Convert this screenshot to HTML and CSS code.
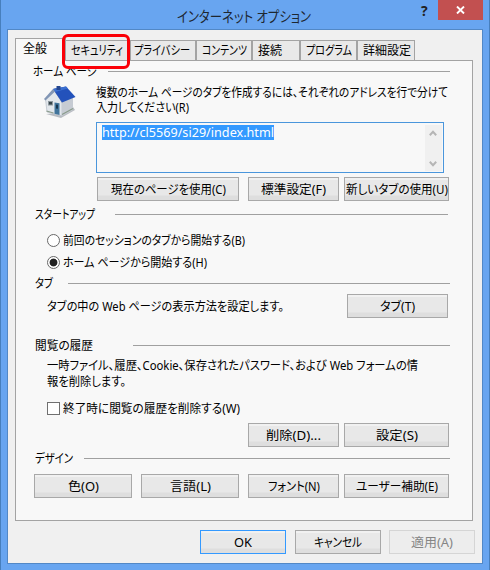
FILE: index.html
```html
<!DOCTYPE html>
<html lang="ja">
<head>
<meta charset="utf-8">
<title>インターネット オプション</title>
<link rel="stylesheet" href="styles.css">
</head>
<body>
<div class="window">
  <header class="titlebar">
    <h1 class="title"><span data-w="134">インターネット オプション</span></h1>
    <span class="help">?</span>
    <div class="close"><svg width="9" height="8" viewBox="0 0 9 8"><path d="M1 .5l7 7M8 .5l-7 7" stroke="#fff" stroke-width="1.9"/></svg></div>
  </header>
  <main class="client">
    <nav class="tabs">
      <div class="tab active"><span data-w="24">全般</span></div>
      <div class="tab security"><span data-w="52">セキュリティ</span><i class="highlight"></i></div>
      <div class="tab privacy"><span data-w="56">プライバシー</span></div>
      <div class="tab content"><span data-w="45">コンテンツ</span></div>
      <div class="tab connect"><span data-w="24">接続</span></div>
      <div class="tab program"><span data-w="46">プログラム</span></div>
      <div class="tab detail"><span data-w="48">詳細設定</span></div>
    </nav>
    <section class="panel">
      <div class="group home"><h2><span data-w="64">ホーム ページ</span></h2><hr></div>
      <div class="homebody">
        <svg class="house" width="36" height="34" viewBox="0 0 36 34">
          <path d="M4 29l15 4 14-8-2-3-14 6z" fill="#b8bcc2"/>
          <path d="M3.500 14L11 5l9 9.500V31L5 27z" fill="#e2e7ec" stroke="#b5bcc6" stroke-width=".7"/>
          <path d="M20 15l11-4v14l-11 6z" fill="#c6cbd3"/>
          <path d="M11 4l3-1 7 12-1 3z" fill="#9aa6b8"/>
          <path d="M11 4L24 1.500 33.500 12 20 17.500z" fill="#2352bb"/>
          <path d="M11 4l13-2.500 2 2L13 7z" fill="#3b6fd0"/>
          <path d="M2 14L11 4l2 2.500-9.500 9z" fill="#8296b5"/>
          <path d="M14.500 1h4v4h-4z" fill="#24468f"/>
          <path d="M6 16h5v4.500H6z" fill="#8d979d"/><path d="M7 17h3v2.500H7z" fill="#354349"/>
          <path d="M12.500 17.500l5 .8V30l-5-1.300z" fill="#41749b"/><path d="M14 19.500l2 .3v4l-2-.3z" fill="#17354e"/>
          <path d="M4.500 26l7 2M20 29.500l11-6" stroke="#899b8b" stroke-width="1.300"/>
        </svg>
        <div class="homeform">
          <p><span data-w="352">複数のホーム ページのタブを作成するには、それぞれのアドレスを行で分けて</span></p>
          <p><span data-w="93">入力してください(R)</span></p>
          <div class="textbox">
            <div class="url"><span data-w="172">http://cl5569/si29/index.html</span></div>
            <div class="scroll">
              <svg width="8" height="6" viewBox="0 0 8 6"><path d="M.8 5.200L4 1.800l3.200 3.400" fill="none" stroke="#b5b5b5" stroke-width="2"/></svg>
              <svg width="8" height="6" viewBox="0 0 8 6"><path d="M.8.8L4 4.200 7.200.8" fill="none" stroke="#b5b5b5" stroke-width="2"/></svg>
            </div>
          </div>
        </div>
      </div>
      <div class="buttons four homebtns">
        <button class="wide"><span data-w="115">現在のページを使用(C)</span></button>
        <button><span data-w="65">標準設定(F)</span></button>
        <button><span data-w="102">新しいタブの使用(U)</span></button>
      </div>
      <div class="group startup"><h2><span data-w="60">スタートアップ</span></h2><hr></div>
      <div class="option"><i class="radio"></i><span data-w="182">前回のセッションのタブから開始する(B)</span></div>
      <div class="option"><i class="radio on"></i><span data-w="144">ホーム ページから開始する(H)</span></div>
      <div class="group tabgroup"><h2><span data-w="18">タブ</span></h2><hr></div>
      <div class="tabrow"><span data-w="237">タブの中の Web ページの表示方法を設定します。</span><button><span data-w="35">タブ(T)</span></button></div>
      <div class="group history"><h2><span data-w="58">閲覧の履歴</span></h2><hr></div>
      <div class="para">
        <p><span data-w="371">一時ファイル、履歴、Cookie、保存されたパスワード、および Web フォームの情</span></p>
        <p><span data-w="79">報を削除します。</span></p>
      </div>
      <div class="option checkrow"><i class="check"></i><span data-w="177">終了時に閲覧の履歴を削除する(W)</span></div>
      <div class="buttons four histbtns">
        <button><span data-w="55">削除(D)...</span></button>
        <button><span data-w="42">設定(S)</span></button>
      </div>
      <div class="group design"><h2><span data-w="38">デザイン</span></h2><hr></div>
      <div class="buttons four designbtns">
        <button><span data-w="31">色(O)</span></button>
        <button><span data-w="41">言語(L)</span></button>
        <button><span data-w="52">フォント(N)</span></button>
        <button><span data-w="82">ユーザー補助(E)</span></button>
      </div>
    </section>
    <footer class="actions">
      <button class="default"><span data-w="18">OK</span></button>
      <button><span data-w="48">キャンセル</span></button>
      <button class="disabled"><span data-w="42">適用(A)</span></button>
    </footer>
  </main>
</div>
<script src="script.js"></script>
</body>
</html>
```
FILE: styles.css
```css
* { box-sizing: border-box; }
body {
  margin: 0;
  font: 12.5px/15px "Noto Sans", "Noto Sans CJK JP", sans-serif;
  font-feature-settings: "palt";
  color: #000;
}
h1, h2, p { margin: 0; font-size: inherit; font-weight: normal; }
.window {
  width: 490px; height: 570px; overflow: hidden;
  padding: 0 6px 0 6px;
  background: #68a5f0;
  border-left: 1px solid #477fbd; border-right: 1px solid #477fbd;
}
.titlebar { height: 29px; display: flex; }
.title { margin-left: 170px; padding-top: 7px; font-size: 14.5px; line-height: 18px; color: #1e2730; width: 244px; }
.help { width: 17px; padding-top: 2px; font: bold 14px/17px "Open Sans", sans-serif; color: #222; }
.close { width: 45px; height: 20px; background: #c25050; display: flex; align-items: center; justify-content: center; }
.client { width: 476px; height: 535px; border: 1px solid #5288c6; background: #f0f0f0; padding: 8px 7px 0; }
.fit { display: inline-block; white-space: nowrap; flex: none; text-align: left; }
.fit > span { display: inline-block; transform-origin: 0 50%; }

.tabs { display: flex; align-items: flex-end; height: 22px; }
.tab { position: relative; height: 20px; background: #e9e9e9; border: 1px solid #a3a3a3; border-bottom: 0; padding: 2px 0 0 5px; line-height: 16px; }
.tab.active { z-index: 1; width: 51px; height: 23px; margin-bottom: -1px; padding: 2px 0 0 7px; background: #f8f8f8; }
.security { width: 64px; padding-left: 5px; border-left: 0; }
.privacy { width: 66px; padding-left: 3px; }
.content { width: 56px; }
.connect { width: 48px; }
.program { width: 57px; }
.detail { width: 58px; }
.highlight { position: absolute; z-index: 2; left: -4px; top: -7px; width: 68px; height: 35px; border: 3px solid #fb0007; border-radius: 6px; }

.panel { width: 458px; height: 461px; border: 1px solid #a3a3a3; background: #f8f8f8; }
.group { display: flex; align-items: center; height: 20px; padding-right: 22px; }
.group hr { flex: 1; height: 1px; margin: 0; border: 0; background: #a0a0a0; }
.group h2 { flex: none; }
.home { padding-left: 17px; }
.home h2 { width: 75px; }
.homebody { display: flex; padding: 4px 0 0 26px; }
.house { width: 36px; margin-right: 18px; }
.homeform p { height: 15px; }
.textbox { display: flex; justify-content: space-between; width: 348px; height: 51px; margin-top: 7px; border: 1px solid #4a96dc; padding: 2px 1px 1px 5px; }
.url { width: 172px; height: 15px; background: #3399ff; color: #fff; }
.scroll { width: 17px; background: #f0f0f0; display: flex; flex-direction: column; align-items: center; justify-content: space-between; padding: 5px 1px 4px 0; }

button {
  display: flex; align-items: center; justify-content: center;
  height: 24px; margin: 0; padding: 0; border: 1px solid #a8a8a8;
  background: linear-gradient(#f1f1f1 0 2px, #e8e8e8 2px 17px, #dedede 18px);
  font: inherit; font-feature-settings: inherit; color: #000;
}
.buttons { display: grid; height: 24px; }
.four { grid-template-columns: 98px 98px 91px 105px; column-gap: 9px; padding-left: 18px; }
.four button:last-child { margin-left: -4px; width: 105px; }
.homebtns { grid-template-columns: 142px 91px 105px; padding-left: 81px; margin-top: 4px; }
.startup { height: 25px; padding: 2px 24px 0 19px; }
.startup h2 { width: 80px; }
.option { display: flex; align-items: center; height: 22px; padding-left: 31px; }
.startup + .option { margin-top: 3px; }
.radio { flex: none; width: 13px; height: 13px; margin-right: 3px; border: 1px solid #686868; border-radius: 50%; background: #fff; }
.on { background: radial-gradient(circle, #222 0 3.500px, #fff 4.300px); }
.tabgroup { padding-left: 19px; }
.tabgroup h2 { width: 33px; }
.tabrow { display: flex; justify-content: space-between; align-items: center; margin-top: 1px; padding: 0 24px 0 31px; }
.tabrow button { width: 101px; }
.history { margin-top: 17px; padding-left: 19px; }
.history h2 { width: 98px; }
.para { padding: 3px 0 0 31px; }
.para p { height: 16px; }
.checkrow { margin-top: 7px; }
.check { flex: none; width: 13px; height: 13px; margin-right: 3px; border: 1px solid #707070; background: #fff; }
.histbtns { grid-template-columns: 91px 105px; padding-left: 232px; margin-top: 4px; }
.design { padding-left: 19px; margin-top: 1px; }
.design h2 { width: 49px; }
.designbtns { margin-top: 6px; }
.actions { display: flex; gap: 9px; padding: 9px 0 0 185px; }
.actions button { width: 86px; }
.actions .default { border-color: #3399ff; }
.actions .disabled { margin-left: -1px; color: #858585; border-color: #d5d5d5; background: #ededed; }
```
FILE: script.js
```js
// Condense each label to its dialog width, as a narrow UI typeface would.
document.querySelectorAll('[data-w]').forEach(function (label) {
  var width = Number(label.dataset.w);
  var box = document.createElement('span');
  box.className = 'fit';
  label.parentNode.insertBefore(box, label);
  box.appendChild(label);
  var natural = label.getBoundingClientRect().width;
  box.style.width = width + 'px';
  label.style.transform = 'scaleX(' + width / natural + ')';
});
```
